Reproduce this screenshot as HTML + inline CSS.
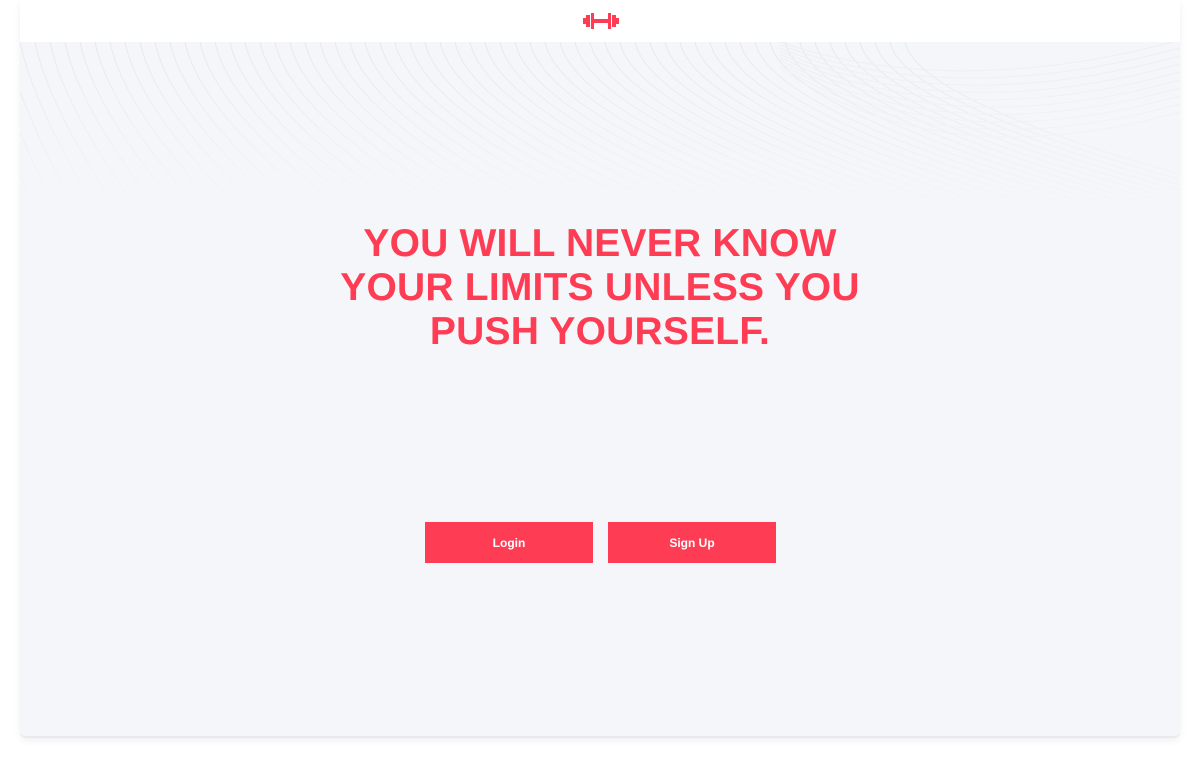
<!DOCTYPE html>
<html><head><meta charset="utf-8"><style>
html,body{margin:0;padding:0;background:#fff;width:1200px;height:760px;overflow:hidden;font-family:"Liberation Sans",sans-serif}
.card{position:absolute;left:20px;top:0;width:1160px;height:736px;background:#f5f6fa;box-shadow:0 3px 8px rgba(0,0,0,0.06);border-radius:0 0 6px 6px;overflow:hidden;border-bottom:2px solid #e8eaef}
.hdr{position:absolute;left:0;top:0;width:1160px;height:42px;background:#fff}
h1{position:absolute;left:0;top:222px;width:1160px;margin:0;text-align:center;color:#fe3d55;font:bold 39px/44px "Liberation Sans",sans-serif;letter-spacing:0.2px}
.btn{position:absolute;top:522px;width:168px;height:41px;background:#fe3d55;color:#fff;font:bold 12px/43px "Liberation Sans",sans-serif;text-align:center}
</style></head><body>
<div class="card">
<svg id="w" width="1160" height="736" style="position:absolute;left:0;top:0">
<defs><linearGradient id="g" x1="0" y1="0" x2="0" y2="1"><stop offset="0" stop-color="#fff" stop-opacity="1"/><stop offset="1" stop-color="#fff" stop-opacity="0"/></linearGradient>
<mask id="m"><rect x="0" y="42" width="1160" height="170" fill="url(#g)"/></mask></defs>
<g id="lines" mask="url(#m)" fill="none" stroke="#e6e8ee" stroke-width="1"></g>
</svg>
<div class="hdr">
<svg style="position:absolute;left:563px;top:12px" width="36" height="18" viewBox="0 0 36 18">
<g fill="#fe3d55"><rect x="0" y="6" width="3" height="6"/><rect x="3" y="3" width="4" height="12"/><rect x="8" y="1" width="3" height="16"/><rect x="11" y="7" width="14" height="4"/><rect x="25" y="1" width="3" height="16"/><rect x="29" y="3" width="4" height="12"/><rect x="33" y="6" width="3" height="6"/></g>
</svg>
</div>
<h1>YOU WILL NEVER KNOW<br>YOUR LIMITS UNLESS YOU<br>PUSH YOURSELF.</h1>
<div class="btn" style="left:405px">Login</div>
<div class="btn" style="left:588px">Sign Up</div>
</div>
<script>
var g=document.getElementById('lines'),s='';
for(var i=-6;i<60;i++){var x=i*15;
s+='<path d="M'+x+' 42 C '+(x+10)+' 90, '+(x+40+i*2)+' 150, '+(x+80+i*6)+' 215"/>';}
for(var j=0;j<10;j++){var y=50+j*8;
s+='<path stroke="#eceef3" d="M760 '+(42+j*3)+' C 900 '+(y+40)+', 1050 '+(y+20)+', 1160 '+(y-10)+'"/>';}
g.innerHTML=s;
</script>
</body></html>
